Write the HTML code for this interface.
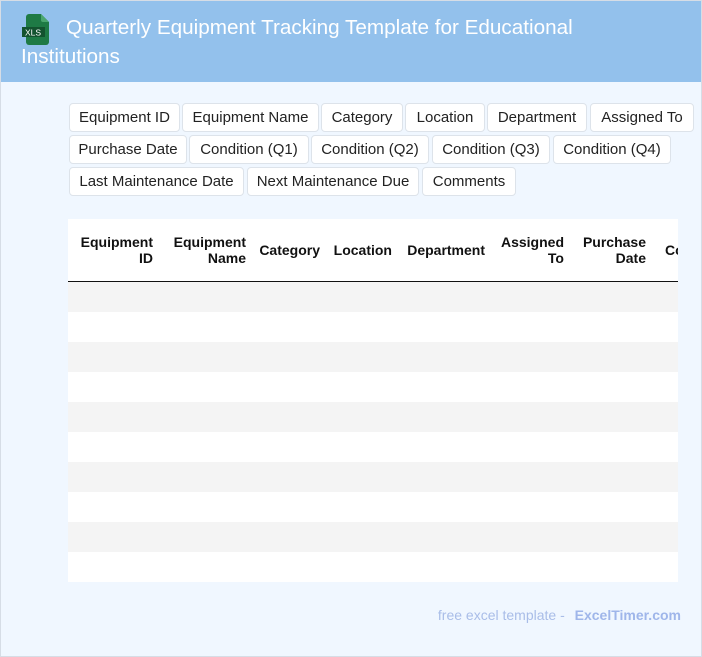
<!DOCTYPE html>
<html><head><meta charset="utf-8"><style>
*{margin:0;padding:0;box-sizing:border-box}
body{width:702px;height:657px;background:#f0f7ff;font-family:"Liberation Sans",Arial,sans-serif;position:relative;overflow:hidden;box-shadow:inset 0 0 0 1px #d6dde6}
.hdr{position:absolute;left:1px;top:1px;width:700px;height:81px;background:#93c1ec}
.title{position:absolute;left:21px;top:13px;width:620px;color:#fff;font-size:20.7px;line-height:29px;text-indent:45px}
.tag{position:absolute;height:29px;background:#fff;border:1px solid #dde3ea;border-radius:4px;font-size:15px;color:#222;line-height:27px;text-align:center;white-space:nowrap}
.tbl{position:absolute;left:68px;top:219px;width:610px;height:363px;background:#fff;overflow:hidden}
.th{position:absolute;top:0;height:62px;font-size:14px;font-weight:bold;text-align:right;display:flex;align-items:center;justify-content:flex-end;line-height:16px;color:#111}
.line{position:absolute;left:0;top:62px;width:610px;height:1px;background:#111}
.row{position:absolute;left:0;width:610px;height:30px}
.foot{position:absolute;right:21px;top:607px;font-size:14px;color:#a9bde8}
.foot b{color:#9fb6ea;margin-left:6px}
</style></head><body>
<div class="hdr"></div>
<svg style="position:absolute;left:21px;top:14px" width="30" height="31" viewBox="0 0 30 31">
<path d="M8 0h12l8 8v20a3 3 0 0 1-3 3H8a3 3 0 0 1-3-3V3a3 3 0 0 1 3-3z" fill="#1e7a45"/><path d="M20 0l8 8h-6a2 2 0 0 1-2-2z" fill="#4aa66e"/>
<rect x="1" y="13" width="23" height="10" fill="#13532f"/>
<text x="4" y="21.5" font-size="8.5" fill="#fff" font-family="Liberation Sans">XLS</text></svg>
<div class="title">Quarterly Equipment Tracking Template for Educational Institutions</div>

<div class="tag" style="left:69px;top:103px;width:111px">Equipment ID</div>
<div class="tag" style="left:182px;top:103px;width:137px">Equipment Name</div>
<div class="tag" style="left:321px;top:103px;width:82px">Category</div>
<div class="tag" style="left:405px;top:103px;width:80px">Location</div>
<div class="tag" style="left:487px;top:103px;width:100px">Department</div>
<div class="tag" style="left:590px;top:103px;width:104px">Assigned To</div>
<div class="tag" style="left:69px;top:135px;width:118px">Purchase Date</div>
<div class="tag" style="left:189px;top:135px;width:120px">Condition (Q1)</div>
<div class="tag" style="left:311px;top:135px;width:118px">Condition (Q2)</div>
<div class="tag" style="left:432px;top:135px;width:118px">Condition (Q3)</div>
<div class="tag" style="left:553px;top:135px;width:118px">Condition (Q4)</div>
<div class="tag" style="left:69px;top:167px;width:175px">Last Maintenance Date</div>
<div class="tag" style="left:247px;top:167px;width:172px">Next Maintenance Due</div>
<div class="tag" style="left:422px;top:167px;width:94px">Comments</div>

<div class="tbl">
<div class="th" style="left:0;width:85px">Equipment<br>ID</div>
<div class="th" style="left:92px;width:86px">Equipment<br>Name</div>
<div class="th" style="left:185px;width:67px">Category</div>
<div class="th" style="left:259px;width:65px">Location</div>
<div class="th" style="left:331px;width:86px">Department</div>
<div class="th" style="left:424px;width:72px">Assigned<br>To</div>
<div class="th" style="left:503px;width:75px">Purchase<br>Date</div>
<div class="th" style="left:597px;width:90px;justify-content:flex-start">Condition</div>
<div class="line"></div>
<div class="row" style="top:63px;background:#f4f4f4"></div>
<div class="row" style="top:123px;background:#f4f4f4"></div>
<div class="row" style="top:183px;background:#f4f4f4"></div>
<div class="row" style="top:243px;background:#f4f4f4"></div>
<div class="row" style="top:303px;background:#f4f4f4"></div>
</div>
<div class="foot">free excel template - <b>ExcelTimer.com</b></div>
</body></html>
